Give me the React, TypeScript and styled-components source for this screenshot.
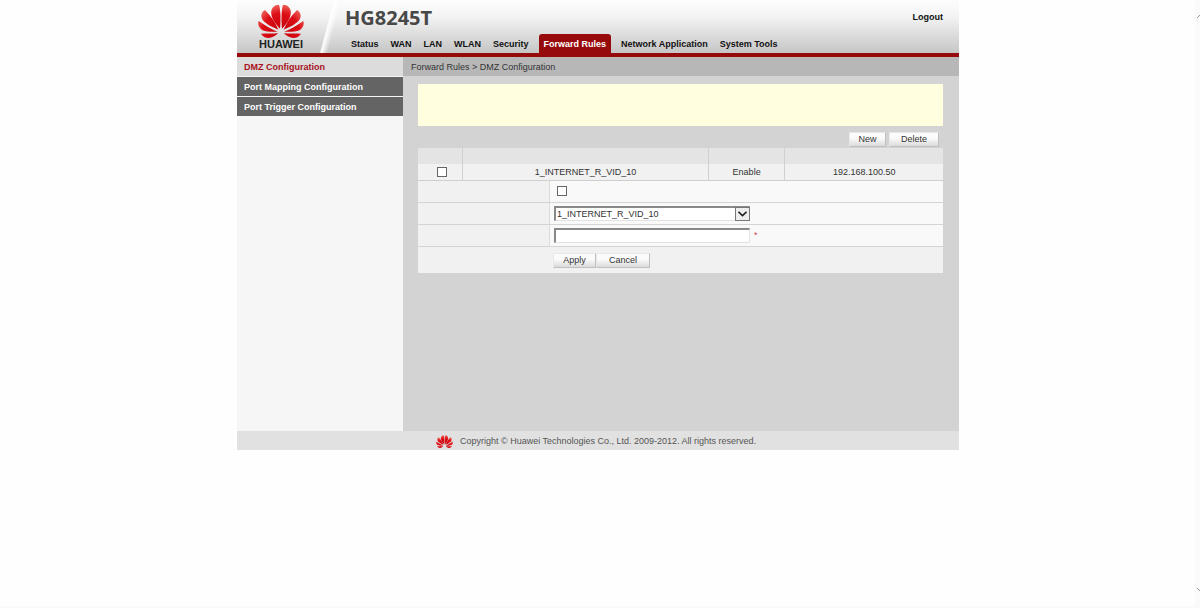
import React from "react";
import styled, { createGlobalStyle, css } from "styled-components";

const GlobalStyle = createGlobalStyle`
  *, *::before, *::after { box-sizing: border-box; }
  body {
    margin: 0;
    background: #fefefe;
    color: #333;
    font: 9px/12px "Liberation Sans", Arial, sans-serif;
  }
  button, input, select { font: inherit; color: inherit; margin: 0; }
`;

const Page = styled.div`
  display: flex;
  min-height: 100vh;
  border-bottom: 2px solid #fafafa;
`;

const Content = styled.div`
  flex: 1;
  min-width: 0;
  padding-left: 1px;
`;

const ScrollGutter = styled.div`
  display: flex;
  flex-direction: column;
  justify-content: space-between;
  width: 5px;
  padding: 13px 0;
  background: #fafafa;
`;

const Shell = styled.div`
  width: 100%;
  max-width: 722px;
  margin: 0 auto;
`;

const Header = styled.header`
  display: flex;
  min-height: 57px;
  border-bottom: 4px solid #970a0c;
  background: linear-gradient(#fdfdfd 0%, #f4f4f4 30%, #c6c6c6 100%);
`;

const Brand = styled.div`
  display: flex;
  flex-direction: column;
  align-items: center;
  width: 82px;
  padding: 4px 0 0 6px;
  color: #222;
  font-size: 11px;
  font-weight: bold;
`;

const HeaderBody = styled.div`
  display: flex;
  flex: 1;
  flex-direction: column;
  justify-content: space-between;
  padding-left: 8px;
`;

const TitleBar = styled.div`
  display: flex;
  align-items: flex-start;
  justify-content: space-between;
  padding: 6px 16px 0 0;
`;

const Model = styled.h1`
  margin: 0;
  color: #484848;
  font: bold 20px/24px "Open Sans", sans-serif;
`;

const Logout = styled.a`
  padding-top: 5px;
  color: #111;
  font-weight: bold;
  text-decoration: none;
`;

const Nav = styled.nav`
  display: flex;
  align-items: flex-end;
`;

const NavLink = styled.a<{ $active?: boolean }>`
  padding: 4px 6px 3px;
  color: #111;
  font-weight: bold;
  text-decoration: none;
  white-space: nowrap;
  ${(p) =>
    p.$active &&
    css`
      margin: 0 4px;
      padding: 4px 5px 3px;
      border-radius: 3px 3px 0 0;
      background: #970a0c;
      color: #fff;
    `}
`;

const Columns = styled.div`
  display: grid;
  grid-template-columns: 166px minmax(0, 1fr);
  min-height: 374px;
`;

const Sidebar = styled.nav`
  display: flex;
  flex-direction: column;
  gap: 1px;
  background: #f6f6f6;
`;

const SideLink = styled.a<{ $active?: boolean }>`
  padding: 4px 7px 3px;
  background: ${(p) => (p.$active ? "#dcdcdc" : "#646464")};
  color: ${(p) => (p.$active ? "#a8101c" : "#fff")};
  font-weight: bold;
  text-decoration: none;
`;

const Main = styled.main`
  background: #d3d3d3;
`;

const Breadcrumb = styled.div`
  padding: 4px 8px 3px;
  background: #b7b7b7;
`;

const Panel = styled.div`
  padding: 8px 16px 8px 15px;
`;

const Notice = styled.div`
  height: 42px;
  background: #ffffdf;
`;

const Toolbar = styled.div`
  display: flex;
  justify-content: flex-end;
  gap: 3px;
  padding: 6px 4px 1px;
`;

const Button = styled.button<{ $width: number }>`
  width: ${(p) => p.$width}px;
  height: 15px;
  padding: 0;
  border: 1px solid #c6c6c6;
  border-color: #e8e8e8 #c0c0c0 #c0c0c0 #e8e8e8;
  background: linear-gradient(#fbfbfb 40%, #dadada);
  line-height: 13px;
`;

const RuleTable = styled.table`
  width: 100%;
  border-collapse: collapse;
  table-layout: fixed;
  text-align: center;

  th, td {
    height: 16px;
    padding: 0;
    border-right: 1px solid #d0d0d0;
  }
  th:last-child, td:last-child { border-right: 0; }
  th { background: #e4e4e4; }
  td { background: #f1f1f1; border-bottom: 1px solid #cfcfcf; }
  td:first-child { padding-left: 4px; }
`;

const CheckBox = styled.input`
  appearance: none;
  display: block;
  width: 10px;
  height: 10px;
  border: 1px solid #666;
  background: #fff;
  td & { margin: 0 auto; }
  &:checked { background: #555; }
`;

const Form = styled.form`
  background: #f1f1f1;
`;

const FormRow = styled.div`
  display: grid;
  grid-template-columns: 132px minmax(0, 1fr);
  height: 22px;
  border-bottom: 1px solid #d4d4d4;
`;

const Label = styled.label`
  border-right: 1px solid #dcdcdc;
`;

const Field = styled.div<{ $inset?: number }>`
  display: flex;
  align-items: center;
  gap: 4px;
  padding-left: ${(p) => p.$inset ?? 4}px;
  background: #f9f9f9;
`;

const control = css`
  width: 196px;
  height: 15px;
  padding: 0 2px;
  border: 1px solid #e2e2e2;
  border-top: 2px solid #888;
  border-left: 2px solid #888;
  border-radius: 0;
  background: #fff;
`;

const TextBox = styled.input`
  ${control}
`;

const SelectWrap = styled.div`
  position: relative;
  display: flex;
`;

const Select = styled.select`
  ${control}
  appearance: none;
  padding: 0 0 0 1px;
`;

const SelectArrow = styled.span`
  position: absolute;
  top: 1px;
  right: 0;
  display: grid;
  place-items: center;
  width: 15px;
  height: 14px;
  border: 1px solid #777;
  background: #eee;
  pointer-events: none;
`;

const Required = styled.span`
  color: #d2455a;
`;

const FormActions = styled.div`
  display: flex;
  padding: 6px 0 5px 135px;
`;

const Footer = styled.footer`
  display: flex;
  align-items: center;
  gap: 7px;
  min-height: 19px;
  padding: 1px 0 0 199px;
  background: #e1e1e1;
  color: #555;
`;

function Petals({ width, height }: { width: number; height: number }) {
  const half = (
    <>
      <path d="M67 74C69 52 70 24 64 2C50 2 40 12 40 26C41 44 54 61 67 74Z" />
      <path d="M62 77C53 56 39 35 21 18C9 26 7 38 15 49C25 61 46 71 62 77Z" />
      <path d="M60 83C42 76 22 65 2 51C-2 62 4 74 14 79C27 84 45 84 60 83Z" />
      <path d="M61 88C45 89 27 89 9 89C16 100 29 105 42 100C50 97 56 93 61 88Z" />
    </>
  );
  return (
    <svg width={width} height={height} viewBox="0 0 140 102" preserveAspectRatio="none" aria-hidden="true">
      <defs>
        <radialGradient id="petal" gradientUnits="userSpaceOnUse" cx="70" cy="86" r="88">
          <stop offset="0" stopColor="#c4000a" />
          <stop offset="0.65" stopColor="#dc0e16" />
          <stop offset="1" stopColor="#f06a60" />
        </radialGradient>
      </defs>
      <g fill="url(#petal)">
        {half}
        <g transform="translate(140 0) scale(-1 1)">{half}</g>
      </g>
    </svg>
  );
}

function Slash() {
  return (
    <svg width="18" height="53" viewBox="0 0 18 53" aria-hidden="true">
      <defs>
        <linearGradient id="slash" gradientUnits="userSpaceOnUse" x1="4" y1="26" x2="15" y2="29">
          <stop offset="0" stopColor="#fff" stopOpacity="0.5" />
          <stop offset="0.5" stopColor="#fff" stopOpacity="0.9" />
          <stop offset="1" stopColor="#fff" stopOpacity="0" />
        </linearGradient>
      </defs>
      <path d="M1 53L15 0H18V22L10 53Z" fill="url(#slash)" />
    </svg>
  );
}

const sections = [
  "Status",
  "WAN",
  "LAN",
  "WLAN",
  "Security",
  "Forward Rules",
  "Network Application",
  "System Tools",
];

const pages = ["DMZ Configuration", "Port Mapping Configuration", "Port Trigger Configuration"];

export default function App() {
  return (
    <>
      <GlobalStyle />
      <Page>
        <Content>
          <Shell>
            <Header>
              <Brand>
                <Petals width={46} height={34} />
                <span>HUAWEI</span>
              </Brand>
              <Slash />
              <HeaderBody>
                <TitleBar>
                  <Model>HG8245T</Model>
                  <Logout href="#logout">Logout</Logout>
                </TitleBar>
                <Nav>
                  {sections.map((s) => (
                    <NavLink key={s} href="#section" $active={s === "Forward Rules"}>
                      {s}
                    </NavLink>
                  ))}
                </Nav>
              </HeaderBody>
            </Header>
            <Columns>
              <Sidebar>
                {pages.map((p, i) => (
                  <SideLink key={p} href="#page" $active={i === 0}>
                    {p}
                  </SideLink>
                ))}
              </Sidebar>
              <Main>
                <Breadcrumb>Forward Rules &gt; DMZ Configuration</Breadcrumb>
                <Panel>
                  <Notice />
                  <Toolbar>
                    <Button type="button" $width={37}>New</Button>
                    <Button type="button" $width={50}>Delete</Button>
                  </Toolbar>
                  <RuleTable>
                    <colgroup>
                      <col style={{ width: "8.5%" }} />
                      <col style={{ width: "46.8%" }} />
                      <col style={{ width: "14.6%" }} />
                      <col />
                    </colgroup>
                    <thead>
                      <tr>
                        <th />
                        <th />
                        <th />
                        <th />
                      </tr>
                    </thead>
                    <tbody>
                      <tr>
                        <td>
                          <CheckBox type="checkbox" aria-label="Select rule" />
                        </td>
                        <td>1_INTERNET_R_VID_10</td>
                        <td>Enable</td>
                        <td>192.168.100.50</td>
                      </tr>
                    </tbody>
                  </RuleTable>
                  <Form>
                    <FormRow>
                      <Label htmlFor="enable" />
                      <Field $inset={7}>
                        <CheckBox id="enable" type="checkbox" aria-label="Enable DMZ" />
                      </Field>
                    </FormRow>
                    <FormRow>
                      <Label htmlFor="wan" />
                      <Field>
                        <SelectWrap>
                          <Select id="wan" aria-label="WAN name">
                            <option>1_INTERNET_R_VID_10</option>
                          </Select>
                          <SelectArrow>
                            <svg width="9" height="6" viewBox="0 0 9 6" fill="none" stroke="#222" strokeWidth="1.6" aria-hidden="true">
                              <path d="M0.5 0.8L4.5 4.6L8.5 0.8" />
                            </svg>
                          </SelectArrow>
                        </SelectWrap>
                      </Field>
                    </FormRow>
                    <FormRow>
                      <Label htmlFor="host" />
                      <Field>
                        <TextBox id="host" type="text" aria-label="Host address" />
                        <Required>*</Required>
                      </Field>
                    </FormRow>
                    <FormActions>
                      <Button type="button" $width={43}>Apply</Button>
                      <Button type="button" $width={54}>Cancel</Button>
                    </FormActions>
                  </Form>
                </Panel>
              </Main>
            </Columns>
            <Footer>
              <Petals width={17} height={13} />
              <span>Copyright © Huawei Technologies Co., Ltd. 2009-2012. All rights reserved.</span>
            </Footer>
          </Shell>
        </Content>
        <ScrollGutter>
          <svg width="5" height="7" viewBox="0 0 5 7" fill="none" stroke="#999" aria-hidden="true">
            <path d="M2 5L5 2" />
          </svg>
          <svg width="5" height="7" viewBox="0 0 5 7" fill="none" stroke="#999" aria-hidden="true">
            <path d="M2 2L5 5" />
          </svg>
        </ScrollGutter>
      </Page>
    </>
  );
}
